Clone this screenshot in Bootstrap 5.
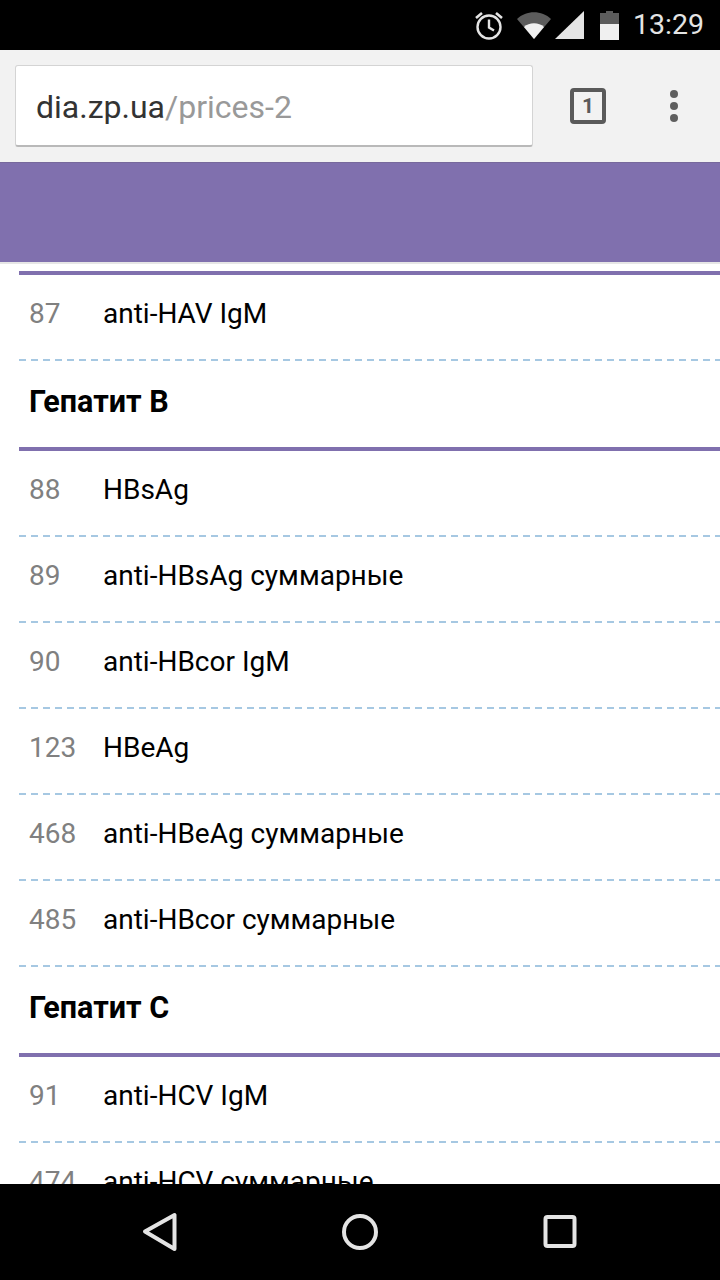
<!DOCTYPE html>
<html lang="en">
<head>
    <meta charset="UTF-8">
    <meta name="viewport" content="width=device-width, initial-scale=1.0">
    <title>dia.zp.ua/prices-2</title>
    <link rel="stylesheet" href="https://cdn.jsdelivr.net/npm/bootstrap@5.3.0/dist/css/bootstrap.min.css">
    <style>
        html, body { height: 1280px; overflow: hidden; }
        body { font-family: Roboto, "Liberation Sans", sans-serif; background: #000; }
        .page-shell { height: 1280px; }
        .status-bar { height: 50px; background: #000; color: #e4e4e4; font-size: 28.500px; padding-right: 16px; }
        .status-time { margin-left: 14px; line-height: 52px; }
        .status-bar svg { display: block; }
        .icon-wifi { margin-left: 13px; }
        .icon-signal { margin-left: 4px; }
        .icon-battery { margin-left: 16px; }
        .chrome-bar { height: 113px; background: #f2f2f2; border-bottom: 1px solid #77699c; padding: 15px 0 0 15px; }
        .url-box { width: 518px; height: 82px; background: #fff; border: 1px solid #d4d4d4; border-bottom: 2px solid #b9b9b9; border-radius: 3px; padding-left: 20px; font-size: 32px; line-height: 82px; color: #333; }
        .url-path { color: #999; }
        .tab-btn { margin-left: 37px; margin-top: 23px; width: 36px; height: 36px; border: 4px solid #5a5a5a; border-radius: 4px; color: #5a5a5a; font-size: 21px; font-weight: 700; line-height: 28px; text-align: center; }
        .more-btn { margin-left: 64px; margin-top: 25px; gap: 4px; }
        .more-btn span { display: block; width: 8px; height: 8px; border-radius: 50%; background: #5f5f5f; }
        .purple-band { height: 99px; background: #8070ae; }
        .page-area { flex: 1 1 auto; min-height: 0; overflow: hidden; background: #fff; padding: 9px 0 0 19px; box-shadow: inset 0 2px 0 #e6e6e6; }
        .price-head { height: 90px; border-bottom: 4px solid #8070ae; padding-left: 10px; font-size: 30.500px; font-weight: 700; color: #000; line-height: 82px; }
        .price-head.first-head { height: 4px; }
        .price-row { height: 86px; padding: 0 0 2px 10px; font-size: 28px; line-height: 78px; color: #000; background: repeating-linear-gradient(90deg, #a6c8e2 0 7px, transparent 7px 12px) left bottom / 100% 2px no-repeat; }
        .price-num { width: 74px; color: #808080; flex: none; }
        .nav-bar { height: 96px; background: #000; }
    </style>
</head>
<body>
    <div class="page-shell d-flex flex-column">
        <!-- Android status bar -->
        <div class="status-bar d-flex justify-content-end align-items-center flex-shrink-0">
            <svg width="30" height="30" viewBox="0 0 30 30" fill="none" stroke="#e4e4e4" stroke-width="2.4">
                <circle cx="15" cy="17" r="11.500"/>
                <path d="M15 9.500V17.500L20 20.500"/>
                <path d="M2 8L8 3M28 8L22 3" stroke-width="2.600"/>
            </svg>
            <svg class="icon-wifi" width="34" height="28" viewBox="0 0 34 28">
                <path d="M0 8C9-1 25-1 34 8L17 28Z" fill="#5c5c5c"/>
                <path d="M7 16C12 11 22 11 27 16L17 28Z" fill="#f0f0f0"/>
            </svg>
            <svg class="icon-signal" width="29" height="28" viewBox="0 0 29 28"><path d="M29 0V28H0Z" fill="#e4e4e4"/></svg>
            <svg class="icon-battery" width="19" height="29" viewBox="0 0 19 29">
                <path d="M6 0H13V2H19V13H0V2H6Z" fill="#5c5c5c"/>
                <rect y="13" width="19" height="16" fill="#f0f0f0"/>
            </svg>
            <span class="status-time">13:29</span>
        </div>

        <!-- Browser toolbar -->
        <div class="chrome-bar d-flex flex-shrink-0">
            <div class="url-box">dia.zp.ua<span class="url-path">/prices-2</span></div>
            <div class="tab-btn">1</div>
            <div class="more-btn d-flex flex-column"><span></span><span></span><span></span></div>
        </div>

        <div class="purple-band flex-shrink-0"></div>

        <div class="page-area">
            <div class="price-head first-head"></div>
            <div class="price-row d-flex"><span class="price-num">87</span><span>anti-HAV IgM</span></div>
            <div class="price-head">Гепатит B</div>
            <div class="price-row d-flex"><span class="price-num">88</span><span>HBsAg</span></div>
            <div class="price-row d-flex"><span class="price-num">89</span><span>anti-HBsAg суммарные</span></div>
            <div class="price-row d-flex"><span class="price-num">90</span><span>anti-HBcor IgM</span></div>
            <div class="price-row d-flex"><span class="price-num">123</span><span>HBeAg</span></div>
            <div class="price-row d-flex"><span class="price-num">468</span><span>anti-HBeAg суммарные</span></div>
            <div class="price-row d-flex"><span class="price-num">485</span><span>anti-HBcor суммарные</span></div>
            <div class="price-head">Гепатит C</div>
            <div class="price-row d-flex"><span class="price-num">91</span><span>anti-HCV IgM</span></div>
            <div class="price-row d-flex"><span class="price-num">474</span><span>anti-HCV суммарные</span></div>
        </div>

        <!-- Android nav bar -->
        <div class="nav-bar d-flex justify-content-center align-items-center flex-shrink-0">
            <svg width="520" height="96" viewBox="0 0 520 96" fill="none" stroke="#e4e4e4" stroke-width="4" stroke-linejoin="round">
                <path d="M45 47.500L74.500 31V65Z"/>
                <circle cx="260" cy="48" r="16"/>
                <rect x="445.500" y="33" width="29" height="29" rx="2"/>
            </svg>
        </div>
    </div>
    <script src="https://cdn.jsdelivr.net/npm/bootstrap@5.3.0/dist/js/bootstrap.bundle.min.js"></script>
</body>
</html>
